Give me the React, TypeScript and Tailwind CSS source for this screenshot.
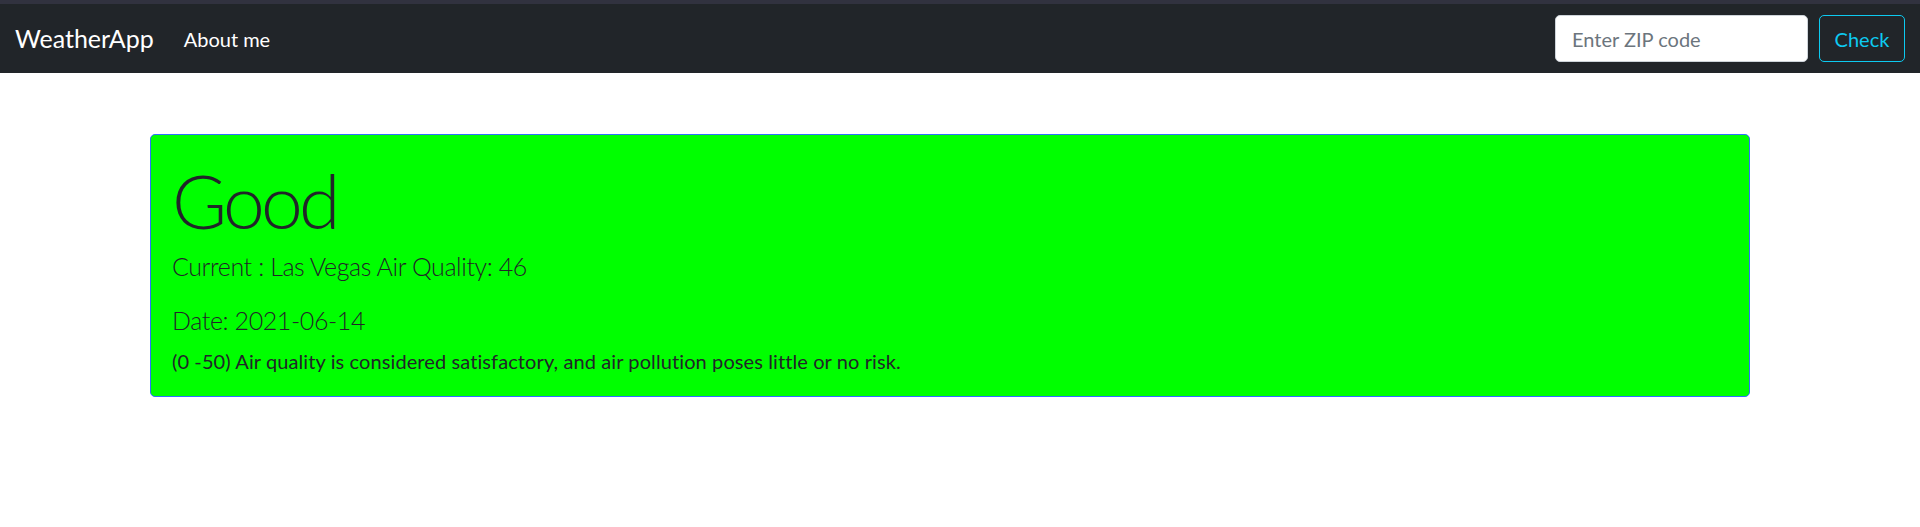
const App = () => {
  return (
    <div className="min-h-[527px] bg-white font-['Lato',sans-serif] text-[#212529]">
      <div className="h-[4px] bg-[#31323f]" />
      <nav className="flex h-[69px] items-center bg-[#212529] pl-[15px] pr-[15px]">
        <a href="#" className="text-[25px] leading-none text-white">
          WeatherApp
        </a>
        <a href="#" className="ml-[30px] text-[20px] leading-none text-white">
          About me
        </a>
        <form className="ml-auto flex items-center gap-[11px]">
          <input
            type="text"
            placeholder="Enter ZIP code"
            className="h-[47px] w-[253px] rounded-[5px] border border-[#ced4da] bg-white px-[16px] text-[20px] text-[#212529] outline-none placeholder:text-[#6c757d]"
          />
          <button
            type="button"
            className="h-[47px] w-[86px] rounded-[5px] border border-[#0dcaf0] text-[20px] text-[#0dcaf0]"
          >
            Check
          </button>
        </form>
      </nav>

      <div className="pl-[150px] pt-[61px]">
        <div className="h-[263px] w-[1600px] rounded-[5px] border border-[#2f6fff] bg-[#00ff00] px-[21px] pt-[20px]">
          <h1 className="text-[75px] font-light leading-[1.2] tracking-[-0.05em]">Good</h1>
          <p className="mt-[3px] text-[25px] font-light leading-[1.5] tracking-[-0.4px]">
            Current : Las Vegas Air Quality: 46
          </p>
          <p className="mt-[16px] text-[25px] font-light leading-[1.5] tracking-[-0.4px]">
            Date: 2021-06-14
          </p>
          <p className="mt-[7px] text-[20px] leading-[1.5] tracking-[0.1px]">
            (0 -50) Air quality is considered satisfactory, and air pollution poses little or no risk.
          </p>
        </div>
      </div>
    </div>
  );
};

export default App;
